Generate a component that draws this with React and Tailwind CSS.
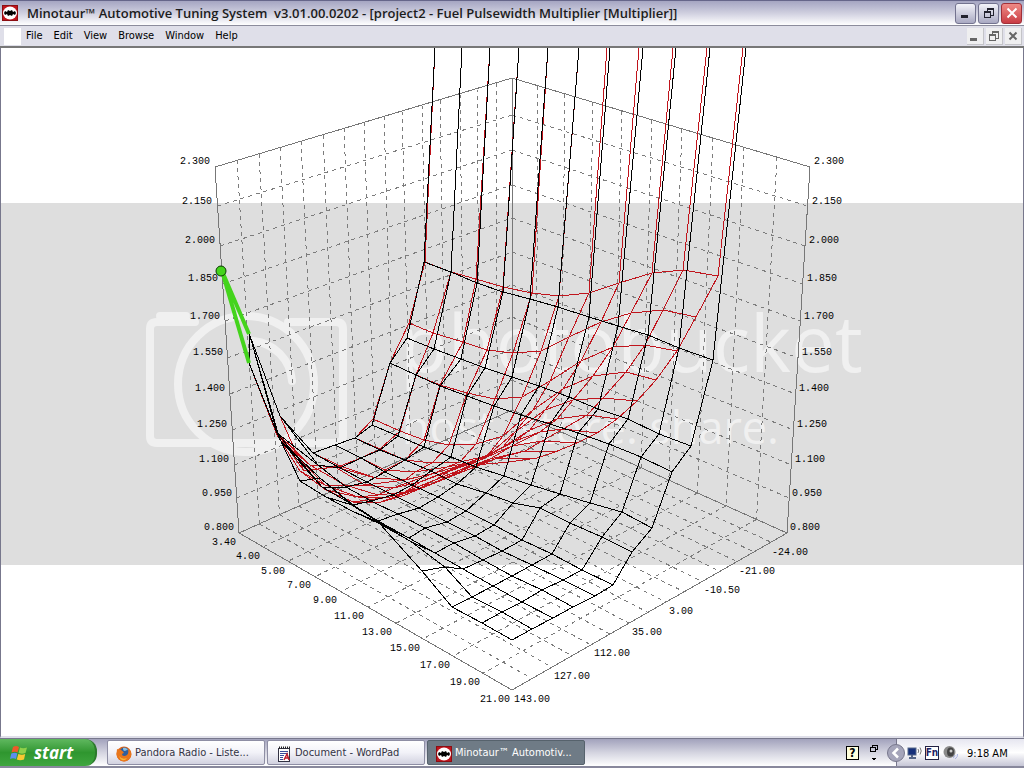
import React from "react";

// pixel size of the plot canvas, kept as the viewBox of the chart
const VIEW_BOX = "1 48 1022 688";

const levelsSide = [167, 206, 246, 284, 321, 358, 394, 430, 465, 498, 533];
const levelsBack = [78, 115, 150, 185, 218, 252, 285, 317, 349, 380, 410];

const wallLeft = [237, 259, 280, 301, 323, 344, 364, 384, 402, 422, 440, 460, 477, 496];
const wallRight = [538, 565, 593, 622, 652, 682, 713, 744, 777];

const floorLeft = [263, 288, 315, 341, 368, 396, 423, 453, 483];
const floorRight = [532, 552, 572, 591, 610, 629, 648, 666, 684, 702, 720, 737, 754, 771];

const leftEdge = (y) => 215 + ((y - 167) * 24) / 366;
const rightEdge = (y) => 810 - ((y - 167) * 23) / 366;

function buildGrid() {
  const lines = [];
  for (let k = 1; k < levelsSide.length - 1; k++) {
    lines.push([leftEdge(levelsSide[k]), levelsSide[k], 512, levelsBack[k]]);
    lines.push([512, levelsBack[k], rightEdge(levelsSide[k]), levelsSide[k]]);
  }
  wallLeft.forEach((x, i) => {
    const t = (x - 215) / 297;
    const bx = 239 + t * 273;
    const by = 533 - t * 123;
    lines.push([x, 167 - t * 89, bx, by]);
    const fx = floorRight[i];
    lines.push([bx, by, fx, 690 - ((fx - 512) * 157) / 275]);
  });
  wallRight.forEach((x, i) => {
    const t = (x - 512) / 298;
    const bx = 512 + t * 275;
    const by = 410 + t * 123;
    lines.push([x, 78 + t * 89, bx, by]);
    const fx = floorLeft[i];
    lines.push([bx, by, fx, 533 + ((fx - 239) * 157) / 273]);
  });
  return lines;
}

// rows run along the 3.40 .. 21.00 axis, the last one leaves the plot at the top
const baseMesh = [
  [[222, 271], [249, 363], [277, 433], [300, 481], [326, 497], [352, 511], [380, 524], [422, 571], [452, 607], [482, 623], [512, 640]],
  [[222, 271], [250, 336], [280, 440], [320, 478], [352, 505], [378, 522], [410, 541], [445, 567], [472, 597], [502, 612], [532, 629]],
  [[250, 336], [277, 433], [322, 487], [353, 505], [378, 521], [409, 538], [435, 553], [463, 569], [493, 586], [522, 602], [553, 618]],
  [[280, 416], [318, 465], [346, 487], [371, 501], [398, 514], [425, 528], [454, 543], [483, 560], [512, 576], [542, 590], [573, 607]],
  [[313, 453], [340, 468], [367, 482], [393, 495], [419, 508], [447, 522], [475, 536], [502, 551], [532, 565], [563, 580], [595, 596]],
  [[335, 445], [361, 458], [385, 472], [412, 485], [438, 497], [466, 511], [494, 525], [522, 540], [552, 554], [582, 570], [613, 585]],
  [[355, 438], [380, 450], [405, 460], [431, 471], [457, 484], [486, 493], [513, 503], [540, 508], [570, 523], [602, 537], [632, 552]],
  [[372, 425], [398, 436], [424, 447], [451, 457], [476, 467], [504, 476], [531, 485], [560, 494], [590, 503], [622, 512], [652, 528]],
  [[390, 363], [416, 375], [440, 386], [467, 396], [494, 406], [521, 415], [550, 424], [578, 433], [609, 444], [641, 457], [672, 472]],
  [[407, 338], [434, 349], [461, 359], [485, 368], [512, 377], [539, 386], [569, 397], [598, 409], [628, 419], [659, 434], [691, 446]],
  [[424, 262], [451, 272], [477, 283], [503, 292], [530, 299], [558, 307], [589, 317], [618, 326], [648, 335], [679, 348], [713, 360]],
  [[435, 48], [462, 48], [490, 48], [519, 48], [548, 48], [579, 48], [610, 48], [643, 48], [676, 48], [710, 48], [746, 48]],
];

const tunedMesh = [
  [[222, 271], [249, 363], [277, 435], [300, 471], [326, 490], [353, 502], [378, 503], [405, 495], [440, 480], [475, 465], [509, 462]],
  [[222, 271], [250, 336], [280, 440], [325, 485], [358, 497], [390, 497], [420, 488], [447, 478], [475, 467], [495, 459], [537, 458]],
  [[250, 336], [277, 433], [310, 465], [345, 485], [378, 495], [405, 492], [435, 480], [460, 470], [490, 459], [525, 451], [555, 452]],
  [[280, 416], [304, 471], [335, 467], [365, 485], [393, 488], [420, 482], [450, 471], [478, 461], [512, 446], [542, 441], [577, 443]],
  [[313, 453], [340, 466], [376, 478], [405, 480], [435, 473], [465, 464], [490, 454], [515, 441], [540, 432], [563, 429], [597, 433]],
  [[335, 445], [361, 458], [385, 470], [415, 472], [447, 467], [478, 461], [503, 447], [530, 430], [557, 419], [587, 415], [617, 419]],
  [[355, 438], [380, 449], [405, 460], [432, 463], [460, 462], [487, 456], [515, 432], [545, 410], [573, 400], [603, 398], [637, 401]],
  [[373, 419], [400, 431], [424, 440], [449, 445], [476, 444], [503, 436], [533, 410], [563, 389], [593, 376], [626, 372], [656, 380]],
  [[390, 363], [416, 375], [440, 385], [467, 393], [495, 399], [522, 397], [550, 381], [581, 361], [613, 347], [645, 345], [677, 351]],
  [[409, 323], [433, 333], [463, 342], [487, 350], [513, 353], [541, 351], [569, 337], [601, 322], [631, 313], [663, 310], [696, 317]],
  [[425, 262], [451, 272], [476, 279], [503, 287], [532, 293], [559, 296], [589, 293], [619, 283], [652, 273], [683, 270], [718, 276]],
  [[435, 48], [462, 48], [490, 48], [519, 48], [548, 48], [579, 48], [607, 48], [639, 48], [673, 48], [707, 48], [743, 48]],
];

const axisLabels = [
  ["2.300", 180, 161], ["2.150", 182, 201], ["2.000", 185, 240], ["1.850", 188, 278],
  ["1.700", 190, 316], ["1.550", 193, 352], ["1.400", 195, 388], ["1.250", 197, 424],
  ["1.100", 199, 459], ["0.950", 202, 493], ["0.800", 204, 527],
  ["2.300", 814, 161], ["2.150", 812, 201], ["2.000", 809, 240], ["1.850", 807, 278],
  ["1.700", 804, 316], ["1.550", 802, 352], ["1.400", 799, 388], ["1.250", 797, 424],
  ["1.100", 795, 459], ["0.950", 792, 493], ["0.800", 790, 527],
  ["3.40", 212, 542], ["4.00", 236, 556], ["5.00", 261, 571], ["7.00", 287, 585],
  ["9.00", 313, 600], ["11.00", 334, 616], ["13.00", 362, 632], ["15.00", 390, 648],
  ["17.00", 420, 665], ["19.00", 450, 682], ["21.00", 480, 699],
  ["143.00", 514, 699], ["127.00", 554, 676], ["112.00", 594, 653], ["35.00", 632, 632],
  ["3.00", 669, 611], ["-10.50", 704, 590], ["-21.00", 739, 571], ["-24.00", 772, 552],
];

function Mesh({ rows, color }) {
  const columns = rows[0].map((_, j) => rows.map((row) => row[j]));
  // the top row is only where the columns leave the plot, so it is not joined up
  const paths = [...rows.slice(0, -1), ...columns];
  return (
    <g fill="none" stroke={color} strokeWidth="1">
      {paths.map((points, i) => (
        <polyline key={i} points={points.map((p) => p.join(",")).join(" ")} />
      ))}
    </g>
  );
}

function Watermark() {
  return (
    <g fill="none" stroke="#f0f0f0" strokeWidth="8" strokeLinecap="round">
      <path d="M195 322H157Q150 322 150 329V436Q150 443 157 443H336Q343 443 343 436V329Q343 322 336 322H288" />
      <path d="M160 316H186" />
      <circle cx="246" cy="384" r="68" />
      <path d="M253 341A43 43 0 0 1 292 381" />
      <g fill="#f0f0f0" stroke="none" fontFamily="'Open Sans', 'Noto Sans', sans-serif">
        <text x="400" y="372" fontSize="78" fontWeight="400">photobucket</text>
        <text x="402" y="444" fontSize="45" fontWeight="400">host. store. share.</text>
      </g>
    </g>
  );
}

function SurfacePlot() {
  return (
    <svg viewBox={VIEW_BOX} className="block h-full w-full" role="img" aria-label="Fuel Pulsewidth Multiplier">
      <rect x="1" y="203" width="1022" height="362" fill="#dedede" shapeRendering="crispEdges" />
      <Watermark />
      <g shapeRendering="crispEdges">
        <g stroke="#7c7c7c" strokeDasharray="4 4">
          {buildGrid().map(([x1, y1, x2, y2], i) => (
            <line key={i} x1={x1} y1={y1} x2={x2} y2={y2} />
          ))}
        </g>
        <g stroke="#777777" fill="none">
          <path d="M239 533L215 167L512 78L810 167L787 533L512 690Z" />
          <path d="M239 533L512 410L787 533M512 78V410" />
        </g>
        <Mesh rows={tunedMesh} color="#c0141c" />
        <Mesh rows={baseMesh} color="#000000" />
      </g>
      <g stroke="#44d41c" strokeWidth="4">
        <path d="M222 271L249 334M222 271L249 363" />
        <circle cx="221" cy="271" r="5" stroke="#0a3a00" strokeWidth="1" fill="#44d41c" />
      </g>
      <g fontFamily="'Liberation Mono', monospace" fontSize="10" fill="#000000">
        {axisLabels.map(([text, x, y]) => (
          <text key={text + x} x={x} y={y + 3}>{text}</text>
        ))}
      </g>
    </svg>
  );
}

function AppIcon() {
  return (
    <svg viewBox="0 0 16 16" className="h-4 w-4 shrink-0">
      <rect width="16" height="16" fill="#8c0d12" />
      <rect x="1" y="1" width="14" height="14" fill="#c0141c" />
      <ellipse cx="8" cy="8" rx="7" ry="6.5" fill="#ffffff" />
      <path d="M2 8L3 6L5 7L6 5L8 6L10 5L11 7L13 6L14 8L13 10L11 9L10 11L8 10L6 11L5 9L3 10Z" fill="#000000" />
    </svg>
  );
}

function MinimizeGlyph() {
  return (
    <svg viewBox="0 0 12 12" className="h-3 w-3" fill="currentColor">
      <rect x="1" y="8" width="7" height="3" />
    </svg>
  );
}

function RestoreGlyph() {
  return (
    <svg viewBox="0 0 12 12" className="h-3 w-3" fill="none" stroke="currentColor" shapeRendering="crispEdges">
      <path d="M4 2.5H11M4 1.5H11M4.5 1V4M10.5 1V8.5H8M1 5.5H8M1 4.5H8M1.5 5V10.5H7.5V5" />
    </svg>
  );
}

function CloseGlyph() {
  return (
    <svg viewBox="0 0 12 12" className="h-3 w-3" fill="none" stroke="currentColor" strokeWidth="2">
      <path d="M1.5 1.5L10.5 10.5M10.5 1.5L1.5 10.5" />
    </svg>
  );
}

function TitleBar() {
  const button =
    "flex h-[21px] w-[21px] items-center justify-center rounded-[3px] border border-[#73738f] bg-linear-to-b from-[#f4f4fa] to-[#a9a9c2] text-[#22222e]";
  return (
    <header className="flex h-[26px] shrink-0 items-center border-t border-b border-t-[#66668a] border-b-[#8c8c9c] bg-linear-to-b from-[#a5a5c2] via-[#cfcfdf] to-white pr-0.5 pl-0.5">
      <AppIcon />
      <h1 className="ml-[9px] flex-1 truncate font-['Open_Sans','Noto_Sans',sans-serif] text-[13px] leading-4 font-semibold whitespace-pre text-[#1c1c1c]">
        {"Minotaur™ Automotive Tuning System  v3.01.00.0202 - [project2 - Fuel Pulsewidth Multiplier [Multiplier]]"}
      </h1>
      <div className="flex gap-0.5">
        <button type="button" aria-label="Minimize" className={button}><MinimizeGlyph /></button>
        <button type="button" aria-label="Restore" className={button}><RestoreGlyph /></button>
        <button
          type="button"
          aria-label="Close"
          className="flex h-[21px] w-[21px] items-center justify-center rounded-[3px] border border-[#a03038] bg-linear-to-b from-[#ee8a86] to-[#c93a44] text-white"
        >
          <CloseGlyph />
        </button>
      </div>
    </header>
  );
}

const menus = ["File", "Edit", "View", "Browse", "Window", "Help"];

function MenuBar() {
  const button = "flex h-[17px] w-[17px] items-center justify-center border-r border-b border-[#c4c4c8] bg-[#efeff0] text-[#666666]";
  return (
    <nav className="flex h-[22px] shrink-0 items-center border-b-2 border-[#777777] bg-[#dfdfe9] pr-0.5 pl-1">
      <span className="h-[17px] w-[17px] bg-white" />
      <div className="ml-[5px] flex flex-1 gap-[11px]">
        {menus.map((name) => (
          <button key={name} type="button" className="text-[11px] leading-4 text-black">{name}</button>
        ))}
      </div>
      <div className="flex gap-0.5">
        <button type="button" aria-label="Minimize document" className={button}><MinimizeGlyph /></button>
        <button type="button" aria-label="Restore document" className={button}><RestoreGlyph /></button>
        <button type="button" aria-label="Close document" className={button}>
          <svg viewBox="0 0 12 12" className="h-3 w-3" stroke="currentColor" strokeWidth="2">
            <path d="M2.5 2.5L9.5 9.5M9.5 2.5L2.5 9.5" />
          </svg>
        </button>
      </div>
    </nav>
  );
}

function WindowsFlag() {
  return (
    <svg viewBox="0 0 18 18" className="h-[18px] w-[18px]">
      <path d="M3 3Q6 1 9 3L7.5 8.5Q5 7 1.5 8.5Z" fill="#ee5a2a" />
      <path d="M10 3.500Q13 5 17 3.500L15.500 9Q12 10.500 8.500 9Z" fill="#8fd04a" />
      <path d="M1.300 9.500Q5 8 7.300 9.500L6 15Q3 13.500 0 15Z" fill="#5a8ef0" />
      <path d="M8.300 10Q12 11.500 15.200 10L14 15.500Q10 17 6.800 15.500Z" fill="#f8c832" />
    </svg>
  );
}

function FirefoxIcon() {
  return (
    <svg viewBox="0 0 16 16" className="h-4 w-4 shrink-0">
      <circle cx="8" cy="8" r="7.500" fill="#e0661a" />
      <circle cx="8.500" cy="6.500" r="5" fill="#2f5f9e" />
      <path d="M7 2Q10 1 12 4Q10 4 9 5Q7 5 7 3Z" fill="#86c0e6" />
      <path d="M1 3Q3 4 5 4Q7 5 8 7Q6 7 6 9Q8 11 11 9Q13 7 12 3Q16 6 15 10Q13 15 8 15.500Q1 15 0.500 8Z" fill="#e8761c" />
      <path d="M3 10Q6 14 11 12Q9 15 6 14Q4 13 3 10Z" fill="#f8b838" />
    </svg>
  );
}

function WordPadIcon() {
  return (
    <svg viewBox="0 0 16 16" className="h-4 w-4 shrink-0">
      <rect x="2.500" y="2.500" width="11" height="13" fill="#ffffff" stroke="#333344" />
      <path d="M3 1.500H14" stroke="#222222" strokeWidth="2" strokeDasharray="1 1" />
      <path d="M4 5.500H12M4 7.500H12M4 9.500H8M4 11.500H7M4 13.500H7" stroke="#3a4a9a" />
      <path d="M8 14L11 8L13 14M9 12H13" stroke="#c02030" strokeWidth="1.500" fill="none" />
    </svg>
  );
}

function SystemTray() {
  return (
    <div className="flex h-full w-32 items-center gap-0.5 border-l border-[#77778c] bg-linear-to-b from-[#e6e6f0] via-white to-[#c6c6d6]">
      <button type="button" aria-label="Show hidden icons" className="-ml-2.5 h-[18px] w-[18px]">
        <svg viewBox="0 0 18 18">
          <circle cx="9" cy="9" r="8.500" fill="#a5a5ba" stroke="#77778c" />
          <path d="M11 4.500L6.500 9L11 13.500" fill="none" stroke="#ffffff" strokeWidth="2.500" />
        </svg>
      </button>
      <svg viewBox="0 0 16 16" className="h-4 w-4">
        <rect x="1" y="3" width="8" height="7" fill="#16307a" stroke="#556688" />
        <path d="M2 13H9M5 10V13" stroke="#556688" strokeWidth="2" />
        <path d="M11 4Q12.500 6 11 8M13 2.500Q15.500 6 13 9.500" fill="none" stroke="#777777" />
      </svg>
      <span className="flex h-[14px] w-[14px] items-center justify-center border border-[#222244] bg-white text-[10px] leading-3 font-bold text-[#222266]">Fn</span>
      <svg viewBox="0 0 16 16" className="ml-0.5 h-4 w-4">
        <circle cx="6.500" cy="7" r="6" fill="#8a8a8a" />
        <ellipse cx="7.500" cy="7" rx="3.500" ry="4.500" fill="#444444" />
        <circle cx="8" cy="6" r="1.500" fill="#cccccc" />
        <path d="M12 14Q15 12 14.500 9M10 13Q12 12 12 10" fill="none" stroke="#aab4e6" />
      </svg>
      <time className="ml-1.5 pt-0.5 text-[11px] leading-4 whitespace-nowrap text-black">9:18 AM</time>
    </div>
  );
}

function Taskbar() {
  const task =
    "flex h-[25px] w-[158px] items-center gap-[3px] rounded-xs border border-[#8e8ea4] bg-linear-to-b from-white via-[#f2f2f8] to-[#d2d2e0] pt-0.5 pl-2 text-[11px] text-[#333344]";
  return (
    <footer className="flex h-[30px] shrink-0 items-center border-t border-b-2 border-t-[#77778c] border-b-[#88889c] bg-linear-to-b from-[#a2a2bc] via-[#d4d4e0] to-white">
      <button
        type="button"
        className="flex h-full w-[97px] items-center gap-1.5 rounded-r-xl border-r-2 border-[#2c7a2c] bg-linear-to-b from-[#5fb85f] via-[#2f962f] to-[#3fa63f] pl-2.5 font-['Open_Sans','Noto_Sans',sans-serif] text-[17px] leading-5 font-bold text-white italic"
      >
        <WindowsFlag />
        start
      </button>
      <div className="ml-2.5 flex flex-1 gap-0.5">
        <button type="button" className={task}>
          <FirefoxIcon />
          Pandora Radio - Liste...
        </button>
        <button type="button" className={task}>
          <WordPadIcon />
          Document - WordPad
        </button>
        <button
          type="button"
          className="flex h-[25px] w-[158px] items-center gap-[3px] rounded-xs border border-[#56626c] bg-[#6f7b86] pt-0.5 pl-2 text-[11px] text-white"
        >
          <AppIcon />
          Minotaur™ Automotiv...
        </button>
      </div>
      <div className="mr-[17px] flex items-center gap-2.5">
        <span className="flex h-[14px] w-[13px] items-center justify-center border border-black bg-[#ffffdc] text-[12px] leading-3 font-bold">?</span>
        <svg viewBox="0 0 10 18" className="h-[18px] w-2.5" fill="none" stroke="#000000" shapeRendering="crispEdges">
          <path d="M3.500 3V1.500H8.500V5.500H7M1.500 3.500H6.500V7.500H1.500Z" />
          <path d="M2 14H7L4.500 16.500Z" fill="#000000" stroke="none" />
        </svg>
      </div>
      <SystemTray />
    </footer>
  );
}

export default function App() {
  return (
    <div className="flex h-screen flex-col overflow-hidden bg-white font-['DejaVu_Sans_Condensed','Noto_Sans',sans-serif]">
      <TitleBar />
      <MenuBar />
      <main className="min-h-0 flex-1 border-x border-b-2 border-x-[#77778c] border-b-[#dfdfe9] bg-white">
        <SurfacePlot />
      </main>
      <Taskbar />
    </div>
  );
}
